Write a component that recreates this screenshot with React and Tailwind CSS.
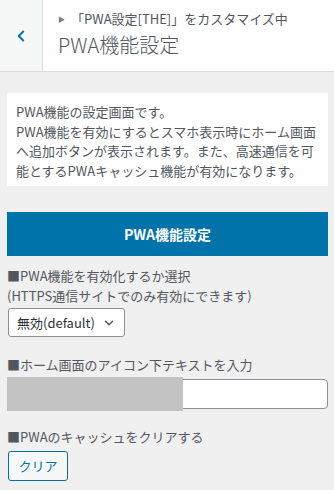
import { ChevronLeft, ChevronDown } from 'lucide-react'

export default function App() {
  return (
    <div className="w-[334px] h-[490px] overflow-hidden bg-[#f0f0f1] text-[#50575e] font-['Noto_Sans_CJK_JP',sans-serif]">
      {/* Header */}
      <div className="flex h-[72px] bg-white border-b border-[#dcdcde]">
        <button className="w-[43px] shrink-0 flex items-center justify-center bg-[#f6f7f7] border-r border-[#dcdcde] text-[#0073aa]">
          <ChevronLeft className="w-[18px] h-[18px]" strokeWidth={2.5} />
        </button>
        <div className="pl-[15px] pt-[10px]">
          <div className="text-[13px] leading-[18px] text-[#50575e]">
            <span className="text-[7px] align-[2px] mr-[6px] text-[#787c82]">▶</span>「PWA設定[THE]」をカスタマイズ中
          </div>
          <div className="text-[20px] leading-[28px] font-light text-[#50575e] mt-[3px]">PWA機能設定</div>
        </div>
      </div>

      <div className="pl-[7px] pr-[6px]">
        {/* Description */}
        <div className="mt-[21px] bg-white px-[9px] pt-[9px] pb-[6px] text-[13px] leading-[19.5px] text-[#50575e]">
          PWA機能の設定画面です。
          <br />
          PWA機能を有効にするとスマホ表示時にホーム画面へ追加ボタンが表示されます。また、高速通信を可能とするPWAキャッシュ機能が有効になります。
        </div>

        {/* Section bar */}
        <div className="mt-[26px] h-[44px] bg-[#0073aa] flex items-center justify-center text-white text-[14px] font-bold">
          PWA機能設定
        </div>

        {/* Enable select */}
        <div className="mt-[10px] text-[13px] leading-[19.5px]">
          ■PWA機能を有効化するか選択
          <br />
          (HTTPS通信サイトでのみ有効にできます)
        </div>
        <div className="mt-[3px] inline-flex items-center h-[29px] pl-[8px] pr-[8px] ml-[1px] bg-white border border-[#8c8f94] rounded-[3px] text-[13px] text-[#2c3338]">
          無効(default)
          <ChevronDown className="w-[14px] h-[14px] ml-[7px] text-[#50575e]" strokeWidth={2.5} />
        </div>

        {/* Home text input */}
        <div className="mt-[18px] text-[13px] leading-[19.5px]">■ホーム画面のアイコン下テキストを入力</div>
        <div className="relative mt-[4px] h-[30px] bg-white border border-[#8c8f94] rounded-[4px]">
          <div className="absolute left-[-1px] top-[-3px] w-[176px] h-[34px] bg-[#c3c3c3]" />
        </div>

        {/* Cache clear */}
        <div className="mt-[18px] text-[13px] leading-[19.5px]">■PWAのキャッシュをクリアする</div>
        <button className="mt-[5px] h-[30px] w-[60px] ml-[1px] bg-[#f6f7f7] border border-[#0071a1] rounded-[3px] text-[#0071a1] text-[13px]">
          クリア
        </button>
      </div>
    </div>
  )
}
